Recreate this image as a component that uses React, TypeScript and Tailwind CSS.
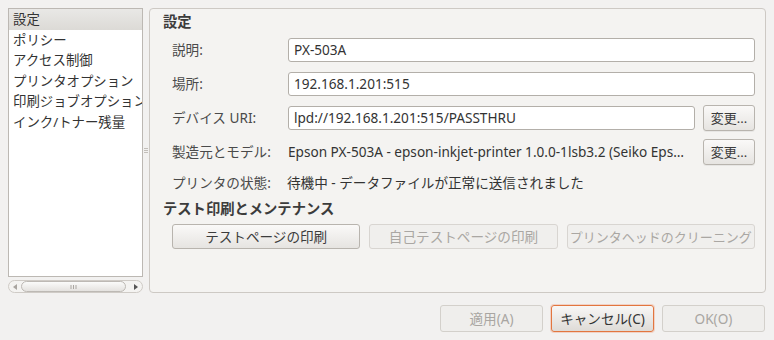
import React from "react";

const font = "font-['Noto_Sans','Noto_Sans_CJK_JP',sans-serif]";

const sideItems = [
  "設定",
  "ポリシー",
  "アクセス制御",
  "プリンタオプション",
  "印刷ジョブオプション",
  "インク/トナー残量",
];

function Field({ value }: { value: string }) {
  return (
    <div className="flex h-[24px] min-w-0 flex-1 items-center rounded-[3px] border border-[#b3afa9] bg-white pl-[5px] text-[#333]">
      {value}
    </div>
  );
}

function ChangeButton() {
  return (
    <button className="h-[26px] w-[52px] shrink-0 whitespace-nowrap rounded-[3px] border border-[#b8b4ae] bg-gradient-to-b from-[#faf9f8] to-[#e6e4e1] text-[13px] text-[#3c3c3c] shadow-[0_1px_0_rgba(0,0,0,0.05)]">
      変更...
    </button>
  );
}

function Row({ label, children }: { label: string; children: React.ReactNode }) {
  return (
    <div className="ml-[9px] flex h-[26px] min-w-0 items-center">
      <div className="w-[116px] shrink-0 text-[#4a4a4a]">{label}</div>
      {children}
    </div>
  );
}

export default function App() {
  return (
    <div className={`flex h-[340px] w-[774px] flex-col overflow-hidden bg-[#f2f1f0] text-[13.6px] leading-[18px] ${font}`}>
      <div className="flex pl-[8px] pr-[8px] pt-[8px]">
        {/* side list */}
        <div className="flex w-[135px] shrink-0 flex-col">
          <div className="h-[269px] overflow-hidden border border-[#bcb8b3] bg-white text-[13.4px]">
            {sideItems.map((item, i) => (
              <div
                key={item}
                className={`flex h-[20.5px] items-center whitespace-nowrap pl-[4px] text-[#333] ${
                  i === 0 ? "bg-gradient-to-b from-[#e9e8e6] to-[#dcdad6]" : ""
                }`}
              >
                {item}
              </div>
            ))}
          </div>
          <div className="mt-[3px] flex h-[13px] items-center rounded-full border border-[#cfcbc6] bg-[#f4f3f1] px-[3px]">
            <svg width="6" height="8" viewBox="0 0 6 8" className="shrink-0">
              <path d="M5 1 L1 4 L5 7 Z" fill="#a9a5a0" />
            </svg>
            <div className="ml-[3px] flex h-[11px] w-[105px] items-center justify-center rounded-full border border-[#bdb9b4] bg-gradient-to-b from-[#fbfbfa] to-[#e4e2df]">
              <svg width="7" height="4" viewBox="0 0 7 4">
                <path d="M1 0 V4 M3.5 0 V4 M6 0 V4" stroke="#aaa6a1" strokeWidth="1" />
              </svg>
            </div>
            <div className="flex-1" />
            <svg width="6" height="8" viewBox="0 0 6 8" className="shrink-0">
              <path d="M1 1 L5 4 L1 7 Z" fill="#555" />
            </svg>
          </div>
        </div>

        {/* pane handle */}
        <div className="flex w-[6px] shrink-0 items-center justify-center">
          <svg width="4" height="6" viewBox="0 0 4 6">
            <path d="M0 0.5 H4 M0 2.5 H4 M0 4.5 H4" stroke="#c2beb9" strokeWidth="1" />
          </svg>
        </div>

        {/* main panel */}
        <div className="h-[285px] min-w-0 flex-1 rounded-[4px] border border-[#cdc9c4] bg-[#f4f3f1] pl-[13px] pr-[10px] pt-[4px]">
          <div className="text-[14.3px] font-bold text-[#3c3c3c]">設定</div>
          <div className="mt-[6px] flex flex-col gap-[8px]">
            <Row label="説明:">
              <Field value="PX-503A" />
            </Row>
            <Row label="場所:">
              <Field value="192.168.1.201:515" />
            </Row>
            <Row label="デバイス URI:">
              <div className="flex min-w-0 flex-1 items-center gap-[8px]">
                <Field value="lpd://192.168.1.201:515/PASSTHRU" />
                <ChangeButton />
              </div>
            </Row>
            <Row label="製造元とモデル:">
              <div className="flex min-w-0 flex-1 items-center gap-[15px]">
                <div className="min-w-0 flex-1 truncate text-[#333]">
                  Epson PX-503A - epson-inkjet-printer 1.0.0-1lsb3.2 (Seiko Epson Corporation)
                </div>
                <ChangeButton />
              </div>
            </Row>
            <div className="ml-[9px] flex h-[20px] items-center">
              <div className="w-[115px] shrink-0 text-[#4a4a4a]">プリンタの状態:</div>
              <div className="text-[#333]">待機中 - データファイルが正常に送信されました</div>
            </div>
          </div>
          <div className="mt-[7px] text-[14.3px] font-bold text-[#3c3c3c]">テスト印刷とメンテナンス</div>
          <div className="ml-[9px] mt-[6px] grid grid-cols-3 gap-[9px]">
            <button className="h-[25px] min-w-0 whitespace-nowrap rounded-[3px] border border-[#b8b4ae] bg-gradient-to-b from-[#faf9f8] to-[#e6e4e1] text-[#3c3c3c]">
              テストページの印刷
            </button>
            <button className="h-[25px] min-w-0 whitespace-nowrap rounded-[3px] border border-[#d8d5d1] bg-[#f0efed] text-[#aaa7a3]">
              自己テストページの印刷
            </button>
            <button className="h-[25px] min-w-0 overflow-hidden whitespace-nowrap rounded-[3px] border border-[#d8d5d1] bg-[#f0efed] text-[13px] text-[#aaa7a3]">
              プリンタヘッドのクリーニング
            </button>
          </div>
        </div>
      </div>

      {/* dialog buttons */}
      <div className="mt-[12px] flex justify-end gap-[8px] pr-[9px]">
        <button className="h-[27px] w-[103px] rounded-[3px] border border-[#d3d0cb] bg-[#efeeec] text-[#a9a6a2]">
          適用(A)
        </button>
        <button className="h-[27px] w-[103px] rounded-[3px] border border-[#e2763f] bg-gradient-to-b from-[#f8f7f6] to-[#dedbd7] text-[#333] shadow-[0_0_0_1px_rgba(240,119,70,0.25)]">
          キャンセル(C)
        </button>
        <button className="h-[27px] w-[103px] rounded-[3px] border border-[#d3d0cb] bg-[#efeeec] text-[#a9a6a2]">
          OK(O)
        </button>
      </div>
    </div>
  );
}
